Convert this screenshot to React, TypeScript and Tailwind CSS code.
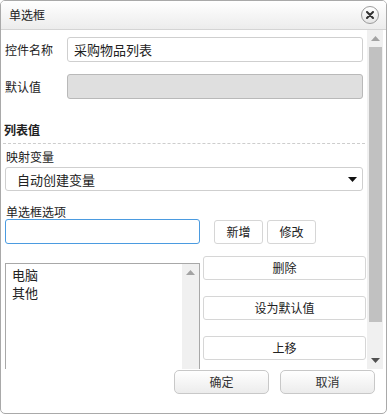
import React from 'react';

const font = { fontFamily: '"Noto Sans CJK SC", "Noto Sans", sans-serif' };

const UpArrow = ({ color }: { color: string }) => (
  <svg width="9" height="5" viewBox="0 0 9 5">
    <polygon points="0,5 4.5,0 9,5" fill={color} />
  </svg>
);

const DownArrow = ({ color }: { color: string }) => (
  <svg width="9" height="5" viewBox="0 0 9 5">
    <polygon points="0,0 9,0 4.5,5" fill={color} />
  </svg>
);

const SideButton: React.FC<{ label: string }> = ({ label }) => (
  <button className="h-[24px] w-full rounded-[3px] border border-[#d6d6d6] bg-white text-[12px] leading-none text-[#222]">
    {label}
  </button>
);

const App: React.FC = () => {
  return (
    <div className="w-[389px] h-[415px] bg-white" style={font}>
      <div className="w-[387px] h-[414px] border border-[#a9a9a9] rounded-[5px] flex flex-col overflow-hidden bg-white">
        {/* Header */}
        <div className="h-[29px] shrink-0 border-b border-[#d4d4d4] bg-gradient-to-b from-white to-[#ececec] flex items-center justify-between pl-[8px] pr-[7px]">
          <span className="text-[12px] leading-none text-[#222]">单选框</span>
          <button className="w-[18px] h-[18px] rounded-full border border-[#9c9c9c] bg-gradient-to-b from-white to-[#e6e6e6] flex items-center justify-center">
            <svg width="8" height="8" viewBox="0 0 8 8">
              <path d="M1 1 L7 7 M7 1 L1 7" stroke="#333" strokeWidth="2" strokeLinecap="round" />
            </svg>
          </button>
        </div>

        {/* Body */}
        <div className="flex h-[339px] shrink-0">
          <div className="w-[365px] overflow-hidden pl-[4px] pt-[7px] text-[#222]">
            <div className="flex items-center">
              <span className="w-[62px] text-[12px] leading-none">控件名称</span>
              <div className="w-[296px] h-[25px] rounded-[3px] border border-[#cfcfcf] bg-white flex items-center pl-[6px] text-[13px] leading-none">
                采购物品列表
              </div>
            </div>
            <div className="flex items-center mt-[12px]">
              <span className="w-[62px] text-[12px] leading-none">默认值</span>
              <div className="w-[296px] h-[25px] rounded-[3px] border border-[#b9b9b9] bg-[#dfdfdf]" />
            </div>

            <div className="mt-[22px] text-[12px] font-bold leading-[18px] -ml-[1px]">列表值</div>
            <div className="mt-[4px] -ml-[2px] mr-[1px] border-t border-dashed border-[#cdcdcd]" />

            <div className="mt-[4px] text-[12px] leading-[18px] pl-[1px]">映射变量</div>
            <div className="mt-[1px] w-[358px] h-[24px] rounded-[3px] border border-[#cfcfcf] bg-white flex items-center justify-between pl-[11px] pr-[5px]">
              <span className="text-[13px] leading-none">自动创建变量</span>
              <DownArrow color="#111" />
            </div>

            <div className="mt-[14px] text-[12px] leading-[14px] pl-[1px]">单选框选项</div>
            <div className="flex items-center">
              <div className="w-[195px] h-[25px] rounded-[3px] border border-[#4b9be0] bg-white" />
              <div className="ml-[14px] flex gap-[4px]">
                <button className="w-[49px] h-[24px] rounded-[3px] border border-[#d6d6d6] bg-white text-[12px] leading-none">新增</button>
                <button className="w-[49px] h-[24px] rounded-[3px] border border-[#d6d6d6] bg-white text-[12px] leading-none">修改</button>
              </div>
            </div>

            <div className="flex mt-[12px]">
              <div className="w-[195px] h-[120px] mt-[7px] border-t border-l border-r border-[#a8a8a8] flex shrink-0">
                <div className="flex-1 pl-[6px] pt-[2px] text-[13px] leading-[18px]">
                  <div>电脑</div>
                  <div>其他</div>
                </div>
                <div className="w-[17px] bg-[#f0f0f0] flex justify-center pt-[6px]">
                  <UpArrow color="#a3a3a3" />
                </div>
              </div>
              <div className="ml-[3px] w-[163px] flex flex-col gap-[16px] shrink-0">
                <SideButton label="删除" />
                <SideButton label="设为默认值" />
                <SideButton label="上移" />
              </div>
            </div>
          </div>

          {/* Scrollbar */}
          <div className="w-[16px] ml-[1px] bg-[#f0f0f0] flex flex-col">
            <div className="h-[16px] flex items-center justify-center">
              <UpArrow color="#a3a3a3" />
            </div>
            <div className="mt-[1px] ml-[2px] w-[13px] h-[275px] bg-[#c1c1c1]" />
            <div className="flex-1 flex items-end justify-center pb-[6px]">
              <DownArrow color="#505050" />
            </div>
          </div>
        </div>

        {/* Footer */}
        <div className="flex-1 flex justify-end gap-[11px] pr-[11px] pt-[1px]">
          <button className="w-[95px] h-[24px] rounded-[5px] border border-[#c8c8c8] bg-gradient-to-b from-white to-[#ececec] text-[12px] leading-none text-[#333]">确定</button>
          <button className="w-[95px] h-[24px] rounded-[5px] border border-[#c8c8c8] bg-gradient-to-b from-white to-[#ececec] text-[12px] leading-none text-[#333]">取消</button>
        </div>
      </div>
    </div>
  );
};

export default App;
